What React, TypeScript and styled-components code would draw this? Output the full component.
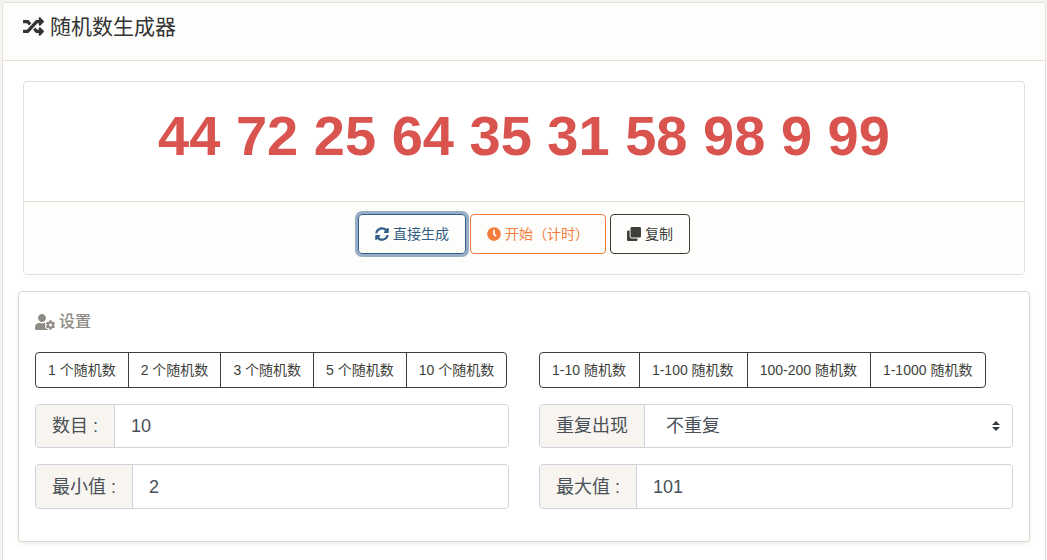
import React, { useState } from "react";
import styled, { createGlobalStyle } from "styled-components";
import { FaRandom, FaSyncAlt, FaClock, FaClone, FaUserCog } from "react-icons/fa";

const GlobalStyle = createGlobalStyle`
  *, *::before, *::after { box-sizing: border-box; }
  body {
    margin: 0;
    background: #f5f4f3;
    color: #3e3f3a;
    font-family: "Liberation Sans", "Noto Sans CJK SC", sans-serif;
    font-size: 14px;
    line-height: 20px;
  }
  button, input, select { font: inherit; color: inherit; margin: 0; }
`;

const Page = styled.main`
  padding: 2px 1px 0 2px;
`;

const Card = styled.section`
  border: 1px solid #e6dfd5;
  border-radius: 4px;
  background: #fff;
  overflow: hidden;
`;

const CardHeader = styled.header`
  padding: 11px 20px 21px;
  border-bottom: 1px solid #e6dfd5;
  background: #fdfdfb;
`;

const Title = styled.h1`
  display: flex;
  align-items: center;
  gap: 6px;
  margin: 0;
  color: #333;
  font-size: 21px;
  font-weight: 400;
  line-height: 25px;
`;

const CardBody = styled.div`
  padding: 20px 20px 30px;
`;

const Result = styled.output`
  display: block;
  padding: 20px 20px 32px;
  color: #d9534f;
  font-size: 56px;
  font-weight: 700;
  line-height: 67px;
  text-align: center;
`;

const Actions = styled.footer`
  display: flex;
  justify-content: center;
  gap: 4px;
  padding: 12px 20px 20px;
  border-top: 1px solid #e6dfd5;
  background: #fdfdfb;
`;

const ActionButton = styled.button<{ $color: string; $active?: boolean }>`
  display: flex;
  align-items: center;
  gap: 4px;
  height: 40px;
  padding: 0 16px;
  border: 1px solid ${(p) => p.$color};
  border-radius: 4px;
  background: transparent;
  color: ${(p) => p.$color};
  white-space: nowrap;
  cursor: pointer;
  box-shadow: ${(p) => (p.$active ? "0 0 0 3px #98adc5" : "none")};
`;

const Panel = styled.section`
  margin: 16px -5px 0;
  padding: 16px 16px 32px;
  border: 1px solid #dfd7ca;
  border-radius: 4px;
  background: #fff;
  box-shadow: 0 2px 4px rgba(0, 0, 0, 0.08);
`;

const PanelTitle = styled.h2`
  display: flex;
  align-items: center;
  gap: 4px;
  margin: 0 0 16px;
  color: #8e8c84;
  font-size: 16px;
  font-weight: 500;
  line-height: 28px;
`;

const Grid = styled.div`
  display: grid;
  grid-template-columns: 1fr 1fr;
  grid-template-rows: 36px 44px 45px;
  gap: 16px 30px;
`;

const ButtonGroup = styled.div<{ $endPadding: number }>`
  display: flex;

  button {
    padding: 0 ${(p) => p.$endPadding}px 0 12px;
  }
`;

const PresetButton = styled.button`
  border: 1px solid #3e3f3a;
  background: transparent;
  white-space: nowrap;
  cursor: pointer;
  &:not(:first-child) { margin-left: -1px; }
  &:first-child { border-radius: 4px 0 0 4px; }
  &:last-child { border-radius: 0 4px 4px 0; }
`;

const Field = styled.div`
  position: relative;
  display: flex;
  border: 1px solid #ced4da;
  border-radius: 4px;
  overflow: hidden;
  color: #495057;
  font-size: 18px;
`;

const FieldLabel = styled.label`
  display: flex;
  align-items: center;
  padding: 0 16px;
  border-right: 1px solid #ced4da;
  background: #f8f5f0;
  white-space: nowrap;
`;

const TextInput = styled.input`
  flex: 1;
  min-width: 0;
  padding: 0 16px;
  border: 0;
  outline: 0;
  background: #fff;
`;

const Select = styled.select`
  flex: 1;
  min-width: 0;
  padding: 0 32px 0 21px;
  border: 0;
  outline: 0;
  appearance: none;
  background: #fff;
`;

const SelectArrow = styled.svg`
  position: absolute;
  top: 16px;
  right: 12px;
  pointer-events: none;
`;

const counts = [1, 2, 3, 5, 10];
const ranges: [number, number][] = [[1, 10], [1, 100], [100, 200], [1, 1000]];

function pick(count: number, min: number, max: number, unique: boolean) {
  const result: number[] = [];
  const limit = unique ? Math.min(count, max - min + 1) : count;
  while (result.length < limit) {
    const n = min + Math.floor(Math.random() * (max - min + 1));
    if (!unique || !result.includes(n)) result.push(n);
  }
  return result;
}

export default function App() {
  const [numbers, setNumbers] = useState([44, 72, 25, 64, 35, 31, 58, 98, 9, 99]);
  const [count, setCount] = useState("10");
  const [min, setMin] = useState("2");
  const [max, setMax] = useState("101");
  const [mode, setMode] = useState("unique");

  const generate = () => setNumbers(pick(Number(count), Number(min), Number(max), mode === "unique"));

  return (
    <>
      <GlobalStyle />
      <Page>
        <Card>
          <CardHeader>
            <Title><FaRandom size={21} />随机数生成器</Title>
          </CardHeader>
          <CardBody>
            <Card>
              <Result>{numbers.join(" ")}</Result>
              <Actions>
                <ActionButton type="button" $color="#325d88" $active onClick={generate}>
                  <FaSyncAlt />直接生成
                </ActionButton>
                <ActionButton type="button" $color="#f47c3c" onClick={() => setTimeout(generate, 1000)}>
                  <FaClock />开始（计时）
                </ActionButton>
                <ActionButton
                  type="button"
                  $color="#3e3f3a"
                  onClick={() => navigator.clipboard?.writeText(numbers.join(" "))}
                >
                  <FaClone />复制
                </ActionButton>
              </Actions>
            </Card>
            <Panel>
              <PanelTitle><FaUserCog size={20} />设置</PanelTitle>
              <Grid>
                <ButtonGroup $endPadding={12}>
                  {counts.map((n) => (
                    <PresetButton type="button" key={n} onClick={() => setCount(String(n))}>
                      {`${n} 个随机数`}
                    </PresetButton>
                  ))}
                </ButtonGroup>
                <ButtonGroup $endPadding={13}>
                  {ranges.map(([a, b]) => (
                    <PresetButton
                      type="button"
                      key={`${a}-${b}`}
                      onClick={() => { setMin(String(a)); setMax(String(b)); }}
                    >
                      {`${a}-${b} 随机数`}
                    </PresetButton>
                  ))}
                </ButtonGroup>
                <Field>
                  <FieldLabel htmlFor="count">数目 :</FieldLabel>
                  <TextInput id="count" value={count} onChange={(e) => setCount(e.target.value)} />
                </Field>
                <Field>
                  <FieldLabel htmlFor="repeat">重复出现</FieldLabel>
                  <Select id="repeat" value={mode} onChange={(e) => setMode(e.target.value)}>
                    <option value="unique">不重复</option>
                    <option value="repeat">可重复</option>
                  </Select>
                  <SelectArrow width="8" height="10" viewBox="0 0 8 10" fill="#343a40" aria-hidden="true">
                    <path d="M4 0L8 4H0zM0 6h8L4 10z" />
                  </SelectArrow>
                </Field>
                <Field>
                  <FieldLabel htmlFor="min">最小值 :</FieldLabel>
                  <TextInput id="min" value={min} onChange={(e) => setMin(e.target.value)} />
                </Field>
                <Field>
                  <FieldLabel htmlFor="max">最大值 :</FieldLabel>
                  <TextInput id="max" value={max} onChange={(e) => setMax(e.target.value)} />
                </Field>
              </Grid>
            </Panel>
          </CardBody>
        </Card>
      </Page>
    </>
  );
}
